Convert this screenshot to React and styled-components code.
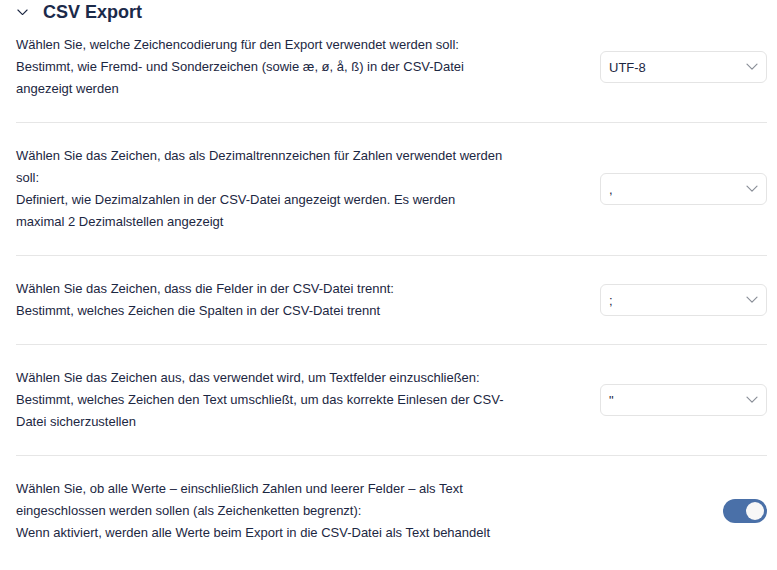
import React, { useState } from 'react'
import styled, { createGlobalStyle } from 'styled-components'

const GlobalStyle = createGlobalStyle`
  body {
    margin: 0;
    background: #ffffff;
    font-family: "Liberation Sans", Arial, sans-serif;
    color: #1c2742;
  }
`

const rows = [
  {
    label: 'Wählen Sie, welche Zeichencodierung für den Export verwendet werden soll:',
    hint: 'Bestimmt, wie Fremd- und Sonderzeichen (sowie æ, ø, å, ß) in der CSV-Datei angezeigt werden',
    value: 'UTF-8',
  },
  {
    label: 'Wählen Sie das Zeichen, das als Dezimaltrennzeichen für Zahlen verwendet werden soll:',
    hint: 'Definiert, wie Dezimalzahlen in der CSV-Datei angezeigt werden. Es werden maximal 2 Dezimalstellen angezeigt',
    value: ',',
  },
  {
    label: 'Wählen Sie das Zeichen, dass die Felder in der CSV-Datei trennt:',
    hint: 'Bestimmt, welches Zeichen die Spalten in der CSV-Datei trennt',
    value: ';',
  },
  {
    label: 'Wählen Sie das Zeichen aus, das verwendet wird, um Textfelder einzuschließen:',
    hint: 'Bestimmt, welches Zeichen den Text umschließt, um das korrekte Einlesen der CSV-Datei sicherzustellen',
    value: '"',
  },
]

function Chevron({ size = 12, color = '#8a8f98' }) {
  return (
    <svg width={size} height={size * 0.6} viewBox="0 0 12 7" fill="none">
      <path d="M1 1l5 5 5-5" stroke={color} strokeWidth="1.2" strokeLinecap="round" strokeLinejoin="round" />
    </svg>
  )
}

function App() {
  const [asText, setAsText] = useState(true)

  return (
    <Page>
      <GlobalStyle />
      <Header>
        <Chevron size={11} color="#1c2742" />
        <Title>CSV Export</Title>
      </Header>
      {rows.map((item, i) => (
        <Row key={item.value} $first={i === 0}>
          <Text>
            {item.label}
            <br />
            {item.hint}
          </Text>
          <Select>
            <span>{item.value}</span>
            <Chevron />
          </Select>
        </Row>
      ))}
      <Row $last>
        <Text>
          Wählen Sie, ob alle Werte – einschließlich Zahlen und leerer Felder – als Text eingeschlossen werden sollen (als Zeichenketten begrenzt):
          <br />
          Wenn aktiviert, werden alle Werte beim Export in die CSV-Datei als Text behandelt
        </Text>
        <Toggle $on={asText} onClick={() => setAsText(!asText)}>
          <Knob $on={asText} />
        </Toggle>
      </Row>
    </Page>
  )
}

export default App

const Page = styled.div`
  padding: 0 10px 0 16px;
`

const Header = styled.div`
  display: flex;
  align-items: center;
  height: 24px;
  gap: 15px;
  margin-bottom: 10px;
  padding-left: 1px;
`

const Title = styled.div`
  font-size: 18px;
  font-weight: 700;
  color: #1b2a4a;
`

const Row = styled.div`
  display: flex;
  align-items: center;
  justify-content: space-between;
  padding: ${p => (p.$first ? '0 0 22px' : '22px 0')};
  border-bottom: ${p => (p.$last ? 'none' : '1px solid #e6e6e6')};
`

const Text = styled.div`
  width: 489px;
  font-size: 13px;
  line-height: 22px;
`

const Select = styled.div`
  display: flex;
  align-items: center;
  justify-content: space-between;
  box-sizing: border-box;
  width: 167px;
  height: 32px;
  padding: 0 8px 0 8px;
  border: 1px solid #e4e4e4;
  border-radius: 6px;
  font-size: 13px;
  color: #1c2742;
`

const Toggle = styled.div`
  position: relative;
  width: 44px;
  height: 24px;
  border-radius: 12px;
  background: ${p => (p.$on ? '#4a70a8' : '#c9ced6')};
  cursor: pointer;
`

const Knob = styled.div`
  position: absolute;
  top: 3px;
  left: ${p => (p.$on ? '23px' : '3px')};
  width: 18px;
  height: 18px;
  border-radius: 50%;
  background: #f7f7f7;
`
